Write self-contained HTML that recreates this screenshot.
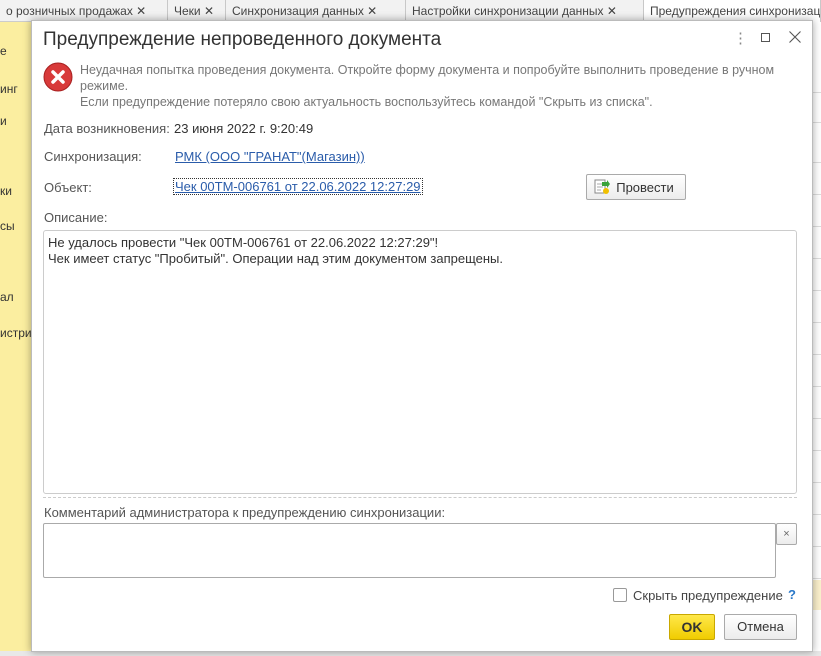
<!DOCTYPE html>
<html><head><meta charset="utf-8"><style>
*{box-sizing:border-box;margin:0;padding:0}
body{width:821px;height:656px;overflow:hidden;position:relative;background:#fff;font-family:"Liberation Sans",Arial,sans-serif;font-size:13px;color:#333}
.abs{position:absolute}
.tabs{left:0;top:0;width:821px;height:22px;background:#f2f2f2;border-bottom:1px solid #ccc}
.tab{position:absolute;top:0;height:22px;border-right:1px solid #c8c8c8;font-size:12px;color:#444;padding:4px 6px;white-space:nowrap;overflow:hidden}
.side{left:0;top:22px;width:95px;height:634px;background:#fbeea0;border-right:1px solid #e0d080}
.side div{position:absolute;left:0;font-size:12px;color:#333}
.right{left:800px;top:22px;width:21px;height:634px;background:#fff}
.rl{position:absolute;left:0;width:21px;height:1px;background:#ddd}
.dlg{left:31px;top:20px;width:782px;height:632px;background:#fff;border:1px solid #bbb;box-shadow:0 0 8px rgba(0,0,0,.35)}
.lnk{color:#2a5caa;text-decoration:underline}
.btn{position:absolute;border:1px solid #aaa;border-radius:2px;background:linear-gradient(#fff,#ececec);font-size:13px;color:#333;text-align:center}
</style></head><body>
<div class="abs tabs">
 <div class="tab" style="left:0;width:168px">о розничных продажах ✕</div>
 <div class="tab" style="left:168px;width:58px">Чеки ✕</div>
 <div class="tab" style="left:226px;width:180px">Синхронизация данных ✕</div>
 <div class="tab" style="left:406px;width:238px">Настройки синхронизации данных ✕</div>
 <div class="tab" style="left:644px;width:177px;background:#fff">Предупреждения синхронизации</div>
</div>
<div class="abs side">
 <div style="top:22px">е</div><div style="top:60px">инг</div><div style="top:92px">и</div>
 <div style="top:162px">ки</div><div style="top:197px">сы</div><div style="top:268px">ал</div><div style="top:304px">истри</div>
</div>
<div class="abs right">
 <div style="position:absolute;top:58px;left:0;font-size:12px">м</div>
 <div class="rl" style="top:70px"></div><div class="rl" style="top:100px"></div>
 <div class="rl" style="top:140px"></div><div class="rl" style="top:172px"></div><div class="rl" style="top:204px"></div><div class="rl" style="top:236px"></div><div class="rl" style="top:268px"></div><div class="rl" style="top:300px"></div><div class="rl" style="top:332px"></div><div class="rl" style="top:364px"></div><div class="rl" style="top:396px"></div><div class="rl" style="top:428px"></div><div class="rl" style="top:460px"></div><div class="rl" style="top:492px"></div><div class="rl" style="top:524px"></div><div class="rl" style="top:556px"></div>
 <div style="position:absolute;top:558px;left:0;width:21px;height:30px;background:#fbf0cc"></div>
</div>
<div class="abs" style="left:0;top:651px;width:821px;height:5px;background:#e8e8e8"></div>
<div class="abs dlg">
 <div class="abs" style="left:11px;top:8px;font-size:19px;color:#333">Предупреждение непроведенного документа</div>
 <div class="abs" style="left:701px;top:8px;font-size:15px;color:#888">⋮</div>
 <div class="abs" style="left:729px;top:12px;width:9px;height:9px;border:1px solid #555"></div>
 <svg class="abs" style="left:757px;top:10px" width="12" height="12" viewBox="0 0 12 12"><path d="M0.5 0.5L11.5 11.5M11.5 0.5L0.5 11.5" stroke="#555" stroke-width="1.1"/></svg>
 <svg class="abs" style="left:11px;top:41px" width="30" height="30" viewBox="0 0 30 30"><circle cx="15" cy="15" r="14" fill="#d83a3a" stroke="#a82020"/><path d="M10 10L20 20M20 10L10 20" stroke="#fff" stroke-width="3.5" stroke-linecap="round"/></svg>
 <div class="abs" style="left:48px;top:41px;width:718px;color:#777;font-size:12.5px;line-height:16px">Неудачная попытка проведения документа. Откройте форму документа и попробуйте выполнить проведение в ручном режиме.<br>Если предупреждение потеряло свою актуальность воспользуйтесь командой "Скрыть из списка".</div>
 <div class="abs" style="left:12px;top:100px;color:#555">Дата возникновения:</div>
 <div class="abs" style="left:142px;top:100px">23 июня 2022 г. 9:20:49</div>
 <div class="abs" style="left:12px;top:128px;color:#555">Синхронизация:</div>
 <div class="abs lnk" style="left:143px;top:128px">РМК (ООО "ГРАНАТ"(Магазин))</div>
 <div class="abs" style="left:12px;top:159px;color:#555">Объект:</div>
 <div class="abs lnk" style="left:142px;top:158px;outline:1px dotted #333;padding:0 1px">Чек 00ТМ-006761 от 22.06.2022 12:27:29</div>
 <div class="btn" style="left:554px;top:153px;width:100px;height:26px;padding-top:5px;padding-left:18px">Провести</div>
 <svg class="abs" style="left:562px;top:158px" width="16" height="16" viewBox="0 0 16 16"><rect x="1" y="1" width="10" height="13" fill="#fff" stroke="#888"/><path d="M3 5h6M3 8h6M3 11h4" stroke="#aaa"/><path d="M8 3h5v-2l3 4-3 4v-2h-5z" fill="#3aa23a"/><circle cx="12" cy="12" r="3" fill="#f0c000"/></svg>
 <div class="abs" style="left:12px;top:189px;color:#555">Описание:</div>
 <div class="abs" style="left:11px;top:209px;width:754px;height:264px;border:1px solid #ccc;border-radius:3px;padding:4px 4px;line-height:16px;color:#333">Не удалось провести "Чек 00ТМ-006761 от 22.06.2022 12:27:29"!<br>Чек имеет статус "Пробитый". Операции над этим документом запрещены.</div>
 <div class="abs" style="left:11px;top:476px;width:754px;border-top:1px dashed #ccc"></div>
 <div class="abs" style="left:12px;top:484px;color:#555">Комментарий администратора к предупреждению синхронизации:</div>
 <div class="abs" style="left:11px;top:502px;width:733px;height:55px;border:1px solid #aaa;border-radius:2px"></div>
 <div class="btn" style="left:744px;top:502px;width:21px;height:22px;font-size:11px;line-height:20px;color:#666">×</div>
 <div class="abs" style="left:581px;top:567px;width:14px;height:14px;border:1px solid #999;border-radius:2px"></div>
 <div class="abs" style="left:601px;top:567px;color:#444">Скрыть предупреждение</div>
 <div class="abs" style="left:756px;top:566px;color:#2a78c8;font-weight:bold">?</div>
 <div class="btn" style="left:637px;top:593px;width:46px;height:26px;background:linear-gradient(#ffe84a,#f0cc00);border-color:#c9a800;font-weight:bold;line-height:24px;font-size:14px">OK</div>
 <div class="btn" style="left:692px;top:593px;width:73px;height:26px;line-height:24px">Отмена</div>
</div>
</body></html>
